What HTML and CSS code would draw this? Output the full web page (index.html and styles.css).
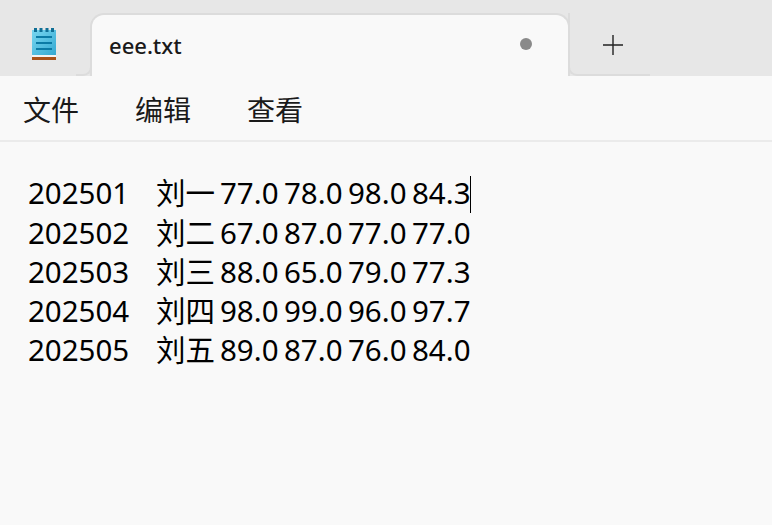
FILE: index.html
```html
<!DOCTYPE html>
<html lang="zh-CN">
<head>
  <meta charset="UTF-8" />
  <meta name="viewport" content="width=device-width, initial-scale=1.0" />
  <title>eee.txt</title>
  <link rel="stylesheet" href="styles.css">
</head>
<body>
  <!-- Tab strip -->
  <div class="tabbar">
    <div class="app-cell">
      <svg class="app-icon" width="24" height="33" viewBox="0 0 24 33">
        <defs>
          <linearGradient id="pad" x1="0" y1="0" x2="1" y2="1">
            <stop offset="0" stop-color="#78d6f0" />
            <stop offset="1" stop-color="#35a9d2" />
          </linearGradient>
        </defs>
        <rect x="0" y="2" width="24" height="25" fill="url(#pad)" />
        <rect x="0" y="27" width="24" height="2" fill="#f4f4f4" />
        <rect x="0" y="29" width="24" height="3" fill="#a8521a" />
        <rect x="2" y="0" width="3" height="4" fill="#0f6f96" />
        <rect x="7.5" y="0" width="3" height="4" fill="#0f6f96" />
        <rect x="13.5" y="0" width="3" height="4" fill="#0f6f96" />
        <rect x="19" y="0" width="3" height="4" fill="#0f6f96" />
        <rect x="4" y="8" width="16" height="2" fill="#0b7aa5" />
        <rect x="4" y="14" width="16" height="2" fill="#0b7aa5" />
        <rect x="4" y="20" width="16" height="2" fill="#0b7aa5" />
      </svg>
      <div class="corner-left"></div>
    </div>
    <div class="tab">
      <span class="tab-title">eee.txt</span>
      <span class="dirty-dot"></span>
    </div>
    <div class="new-tab">
      <svg width="20" height="20" viewBox="0 0 20 20">
        <path d="M0 10H20M10 0V20" stroke="#222" stroke-width="1.4" fill="none" />
      </svg>
    </div>
  </div>

  <!-- Menu -->
  <div class="menubar">
    <span class="menu-item">文件</span>
    <span class="menu-item">编辑</span>
    <span class="menu-item">查看</span>
  </div>

  <!-- Editor -->
  <pre class="editor">202501	刘一	77.0	78.0	98.0	84.3<span class="caret"></span>
202502	刘二	67.0	87.0	77.0	77.0
202503	刘三	88.0	65.0	79.0	77.3
202504	刘四	98.0	99.0	96.0	97.7
202505	刘五	89.0	87.0	76.0	84.0</pre>
</body>
</html>
```

FILE: styles.css
```css
html, body {
  margin: 0;
  height: 100%;
}

body {
  background-color: #f9f9f9;
  font-family: "Noto Sans", "Noto Sans CJK SC", sans-serif;
  overflow: hidden;
}

.tabbar {
  display: flex;
  height: 76px;
  padding-top: 13px;
  box-sizing: border-box;
  background-color: #e7e7e7;
}

.app-cell {
  width: 92px;
  display: flex;
  justify-content: space-between;
  align-items: flex-end;
  padding-left: 32px;
  box-sizing: border-box;
}

.app-icon {
  margin-bottom: 15px;
}

.corner-left {
  width: 16px;
  height: 10px;
  box-sizing: border-box;
  border-bottom: 2px solid #dcdcdc;
  border-right: 2px solid #dcdcdc;
  border-bottom-right-radius: 9px;
  background-color: #e7e7e7;
}

.tab {
  width: 480px;
  display: flex;
  align-items: center;
  justify-content: space-between;
  padding: 0 36px 0 17px;
  box-sizing: border-box;
  background-color: #f9f9f9;
  border: 2px solid #dcdcdc;
  border-bottom: none;
  border-radius: 14px 14px 0 0;
  margin-left: -2px;
  margin-right: -2px;
  position: relative;
}

.tab-title {
  font-size: 22px;
  font-weight: 500;
  color: #1a1a1a;
  margin-bottom: 2px;
}

.dirty-dot {
  width: 12px;
  height: 12px;
  border-radius: 50%;
  background-color: #8a8a8a;
  margin-bottom: 3px;
}

.new-tab {
  width: 82px;
  display: flex;
  align-items: center;
  justify-content: center;
  padding: 2px 0 0 6px;
  box-sizing: border-box;
  border-bottom: 2px solid #dcdcdc;
  border-left: 2px solid #dcdcdc;
  border-bottom-left-radius: 9px;
}

.menubar {
  height: 66px;
  display: flex;
  align-items: center;
  gap: 56px;
  padding: 2px 0 0 23px;
  box-sizing: border-box;
  border-bottom: 2px solid #ebebeb;
}

.menu-item {
  font-size: 28px;
  color: #1a1a1a;
}

.editor {
  margin: 0;
  padding: 31px 0 0 28px;
  font-family: "Noto Sans", "Noto Sans CJK SC", sans-serif;
  font-size: 29.5px;
  line-height: 39px;
  tab-size: 64px;
  color: #000;
}

.caret {
  display: inline-block;
  width: 1px;
  height: 37px;
  margin-left: -1px;
  background-color: #000;
  vertical-align: -9px;
}
```
